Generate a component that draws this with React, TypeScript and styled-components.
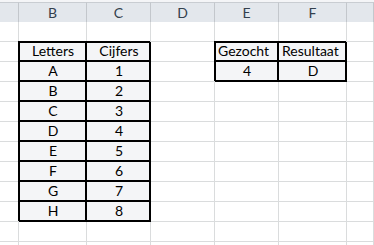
import React from 'react';
import styled, { createGlobalStyle } from 'styled-components';

const GlobalStyle = createGlobalStyle`
    html, body {
        margin: 0;
        padding: 0;
        background: #fff;
        overflow: hidden;
    }
`;

const GRID = '#dadcdd';

const Sheet = styled.div`
    display: grid;
    grid-template-columns: 19px 68px 64px 64px 64px 68px 1fr;
    grid-auto-rows: 20px;
    padding-top: 2px;
    background: #f4f5f7;
    font-family: Lato, "Liberation Sans", sans-serif;
    font-size: 14px;
    color: #000;
`;

const ColHead = styled.div`
    box-sizing: border-box;
    height: 21px;
    display: flex;
    align-items: center;
    justify-content: center;
    background: #e3e7ec;
    border-top: 1px solid #c9cdd2;
    border-right: 1px solid #c3c7cc;
    border-bottom: 1px solid #b8bcc1;
    color: #34404d;
    font-size: 14px;
`;

const Cell = styled.div<{ $align: string; $box: boolean; $edgeL: boolean; $edgeT: boolean }>`
    box-sizing: border-box;
    display: flex;
    align-items: flex-end;
    justify-content: ${p => (p.$align === 'center' ? 'center' : 'flex-start')};
    padding: 0 2px 1px 3px;
    background: ${p => (p.$box ? 'transparent' : '#fff')};
    border-right: 1px solid ${p => (p.$box ? '#000' : GRID)};
    border-bottom: 1px solid ${p => (p.$box ? '#000' : GRID)};
    white-space: nowrap;
    overflow: hidden;
    line-height: 18px;
    box-shadow: ${p => {
        if (!p.$box) return 'none';
        const s = ['-1px -1px 0 #000', 'inset -1px -1px 0 #000'];
        if (p.$edgeL) s.push('inset 1px 0 0 #000');
        if (p.$edgeT) s.push('inset 0 1px 0 #000');
        return s.join(', ');
    }};
`;

type Spec = { text: string; align: 'left' | 'center' };

const columns = ['', 'B', 'C', 'D', 'E', 'F', ''];
const ROWS = 12;

const cells: Record<string, Spec> = {
    '1,1': { text: 'Letters', align: 'center' },
    '1,2': { text: 'Cijfers', align: 'center' },
    '1,4': { text: 'Gezocht', align: 'left' },
    '1,5': { text: 'Resultaat', align: 'left' },
    '2,4': { text: '4', align: 'center' },
    '2,5': { text: 'D', align: 'center' },
};
['A', 'B', 'C', 'D', 'E', 'F', 'G', 'H'].forEach((l, i) => {
    cells[`${i + 2},1`] = { text: l, align: 'center' };
    cells[`${i + 2},2`] = { text: String(i + 1), align: 'center' };
});

// bordered ranges: letters table and the lookup result
const boxes = [
    { r0: 1, r1: 9, c0: 1, c1: 2 },
    { r0: 1, r1: 2, c0: 4, c1: 5 },
];

const boxAt = (r: number, c: number) =>
    boxes.find(b => r >= b.r0 && r <= b.r1 && c >= b.c0 && c <= b.c1);

const App = () => {
    const rows = [];
    for (let r = 0; r < ROWS; r++) {
        for (let c = 0; c < columns.length; c++) {
            const spec = cells[`${r},${c}`];
            const box = boxAt(r, c);
            rows.push(
                <Cell
                    key={`${r}-${c}`}
                    $align={spec ? spec.align : 'left'}
                    $box={!!box}
                    $edgeL={!!box && c === box.c0}
                    $edgeT={!!box && r === box.r0}
                >
                    {spec ? spec.text : ''}
                </Cell>
            );
        }
    }

    return (
        <>
            <GlobalStyle />
            <Sheet>
                {columns.map((name, i) => (
                    <ColHead key={i}>{name}</ColHead>
                ))}
                {rows}
            </Sheet>
        </>
    );
};

export default App;
